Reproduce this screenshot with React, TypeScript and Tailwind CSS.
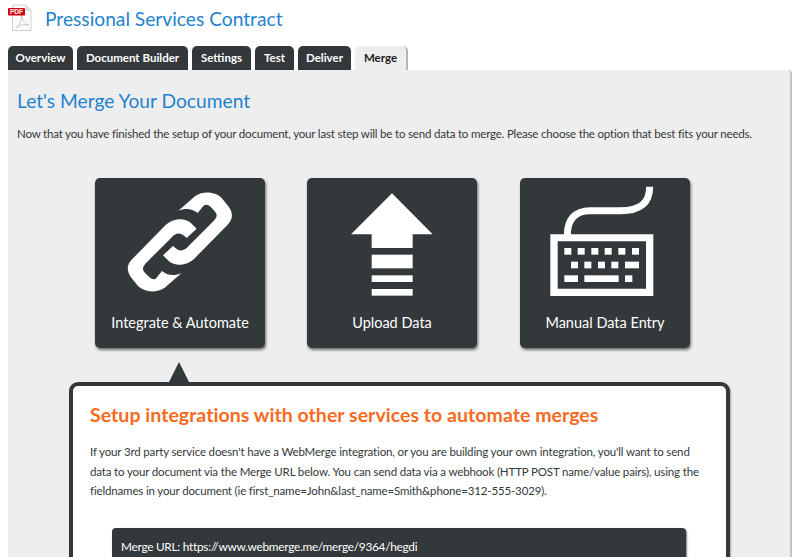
import React from 'react';

const tabs = [
  { label: 'Overview', width: 'w-[65px]' },
  { label: 'Document Builder', width: 'w-[111px]' },
  { label: 'Settings', width: 'w-[59px]' },
  { label: 'Test', width: 'w-[39px]' },
  { label: 'Deliver', width: 'w-[53px]' },
];

const PdfIcon = () => (
  <svg width="24" height="28" viewBox="0 0 24 28" className="block">
    <path d="M4.5 1 H18 L23 6 V26.5 H4.5 Z" fill="#fbfbfb" stroke="#cfcfcf" />
    <path d="M18 1 V6 H23" fill="#e8e8e8" stroke="#cfcfcf" />
    <path d="M8 24 C12 20 14 15 13.5 11 C14 15 17 20 21 21 C16 20 11 21 8 24 Z" fill="none" stroke="#c9c0bc" strokeWidth="0.9" />
    <rect x="0" y="4" width="17" height="7.5" rx="1" fill="#d8000c" />
    <text x="8.5" y="10" textAnchor="middle" fill="#fff" fontSize="6.5" fontWeight="700" fontFamily="Liberation Sans, sans-serif">PDF</text>
  </svg>
);

const LinkIcon = () => {
  const half = 'M293 122 L343 79 C373 59 408 69 423 84 L443 109 C460 132 455 149 441 164 L343 264 C318 289 283 289 265 274 L247 256 L277 228 C298 249 311 242 323 229 L398 154 C415 136 408 129 395 116 C385 104 373 99 365 112 L351 129 C333 114 313 114 293 122 Z';
  return (
    <svg viewBox="43 24 510 381" className="block w-[170px] h-[127px]">
      <path d={half} fill="#fff" />
      <path d={half} fill="#fff" transform="rotate(180 297.5 216)" />
    </svg>
  );
};

const UploadIcon = () => (
  <svg viewBox="21 24 510 381" className="block w-[170px] h-[127px]" fill="#fff">
    <polygon points="276,70 398,193 338,193 338,234 215,234 215,193 153,193" />
    <rect x="215" y="254" width="123" height="41" />
    <rect x="215" y="316" width="123" height="20" />
    <rect x="215" y="357" width="123" height="20" />
  </svg>
);

const KeyboardIcon = () => (
  <svg viewBox="30 24 510 381" className="block w-[170px] h-[127px]" fill="#fff">
    <path d="M172 195 C172 150 195 122 240 122 L330 122 C390 122 419 100 419 50" fill="none" stroke="#fff" strokeWidth="21" />
    <path fillRule="evenodd" d="M121 193 H430 V378 H121 Z M143 214 V356 H408 V214 Z" />
    {[163, 203, 244, 284, 325, 366].map((x) => (
      <rect key={x} x={x} y="234" width="21" height="20" />
    ))}
    {[183, 223, 264, 304].map((x) => (
      <rect key={x} x={x} y="275" width="21" height="20" />
    ))}
    <rect x="345" y="275" width="42" height="20" />
    <rect x="163" y="316" width="41" height="20" />
    <rect x="223" y="316" width="103" height="20" />
    <rect x="345" y="316" width="22" height="20" />
  </svg>
);

const Card = ({ icon, label }: { icon: React.ReactNode; label: string }) => (
  <div className="w-[170px] h-[170px] rounded-[5px] bg-[#33383b] shadow-[1px_2px_3px_rgba(0,0,0,0.55)]">
    {icon}
    <div className="mt-[7px] text-center text-[14.5px] leading-[22px] text-white">{label}</div>
  </div>
);

export default function App() {
  return (
    <div className="w-[800px] h-[557px] overflow-hidden bg-white font-['Lato','Noto_Sans',sans-serif] text-[#33383b]">
      <div className="flex items-start pl-2 pt-1 h-[46px]">
        <PdfIcon />
        <h1 className="ml-[13px] text-[19.2px] leading-[30px] text-[#1f82cf]">Pressional Services Contract</h1>
      </div>

      <div className="flex gap-1 pl-2 h-6">
        {tabs.map((tab) => (
          <div
            key={tab.label}
            className={`${tab.width} h-6 rounded-t-[5px] bg-[#33383b] text-center text-[11.5px] font-bold leading-[24px] text-white`}
          >
            {tab.label}
          </div>
        ))}
        <div className="w-[53px] h-6 rounded-t-[5px] border-r-2 border-[#b5b5b5] bg-[#eeeeee] text-center text-[11.5px] font-bold leading-[24px] text-[#222]">
          Merge
        </div>
      </div>

      <div className="ml-2 w-[784px] h-[487px] rounded-tr-[4px] border-r-2 border-[#c4c4c4] bg-[#eeeeee] pl-[9px] pt-[19px]">
        <h2 className="text-[19.2px] leading-[24px] text-[#1f82cf]">Let's Merge Your Document</h2>
        <p className="mt-[11px] text-[11.5px] leading-[20px] tracking-[-0.18px] text-[#33383b]">
          Now that you have finished the setup of your document, your last step will be to send data to merge. Please choose the option that best fits your needs.
        </p>

        <div className="mt-[34px] ml-[78px] flex gap-[42px]">
          <Card icon={<LinkIcon />} label="Integrate & Automate" />
          <Card icon={<UploadIcon />} label="Upload Data" />
          <div className="ml-px">
            <Card icon={<KeyboardIcon />} label="Manual Data Entry" />
          </div>
        </div>

        <div className="ml-[52px] mt-[14px] w-[661px]">
          <div className="ml-[100px] h-0 w-0 border-x-[10.5px] border-b-[20px] border-x-transparent border-b-[#33383b]" />
          <div className="h-[300px] rounded-[9px] border-4 border-[#33383b] bg-white pl-[17px] pr-4 pt-[16px] shadow-[1px_1px_2px_rgba(0,0,0,0.3)]">
            <h3 className="text-[19.5px] font-bold leading-[26px] tracking-[0.04px] text-[#f96a21]">Setup integrations with other services to automate merges</h3>
            <p className="mt-[14px] text-[11.5px] leading-[19.5px] tracking-[-0.15px] text-[#33383b]">
              If your 3rd party service doesn't have a WebMerge integration, or you are building your own integration, you'll want to send data to your document via the Merge URL below. You can send data via a webhook (HTTP POST name/value pairs), using the fieldnames in your document (ie first_name=John&amp;last_name=Smith&amp;phone=312-555-3029).
            </p>
            <div className="mt-[27px] ml-[22px] w-[574px] h-[60px] rounded-[4px] bg-[#33383b] pl-[9px] pt-[9px] text-[11.8px] leading-[20px] tracking-[-0.25px] text-white shadow-[1px_1px_2px_rgba(0,0,0,0.5)]">
              Merge URL: https://www.webmerge.me/merge/9364/hegdi
            </div>
          </div>
        </div>
      </div>
    </div>
  );
}
